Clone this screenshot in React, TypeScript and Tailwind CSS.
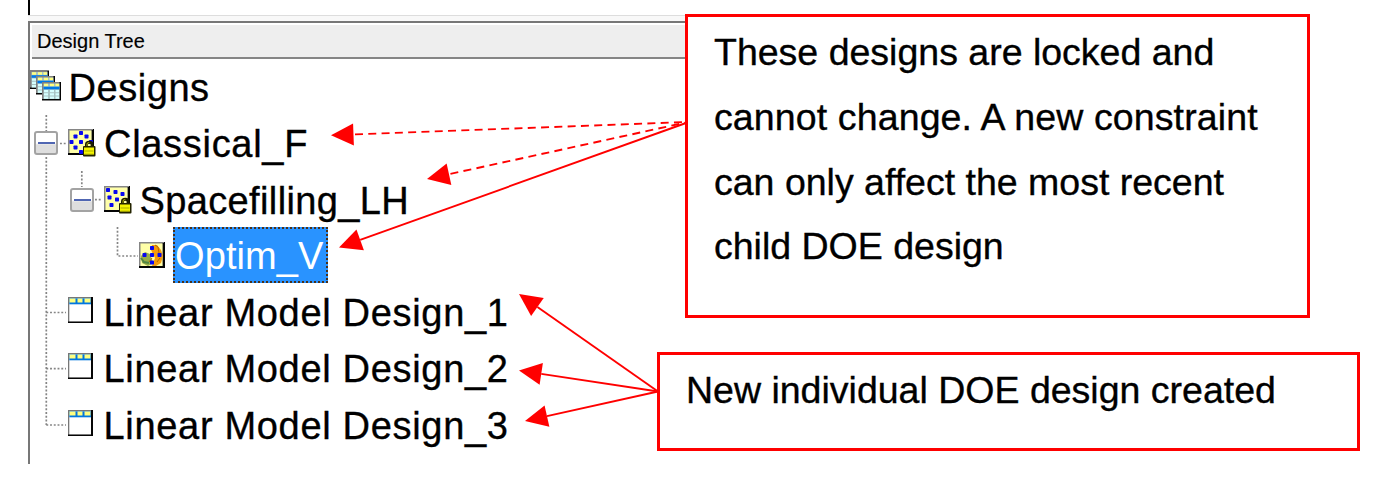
import type { ReactNode } from "react";

type Point = [number, number];

function Arrow({ from, to, dashed = false }: { from: Point; to: Point; dashed?: boolean }) {
  const dx = from[0] - to[0];
  const dy = from[1] - to[1];
  const length = Math.hypot(dx, dy);
  const ux = dx / length;
  const uy = dy / length;
  const bx = to[0] + ux * 22.5;
  const by = to[1] + uy * 22.5;
  return (
    <g>
      <line
        x1={bx}
        y1={by}
        x2={from[0]}
        y2={from[1]}
        stroke="#ff0000"
        strokeWidth="1.9"
        strokeDasharray={dashed ? "8 5.3" : undefined}
        strokeDashoffset={dashed ? -1.5 : undefined}
      />
      <polygon
        points={`${to[0]},${to[1]} ${bx - uy * 11},${by + ux * 11} ${bx + uy * 11},${by - ux * 11}`}
        fill="#ff0000"
      />
    </g>
  );
}

function TableSheet({ x, y }: { x: number; y: number }) {
  return (
    <g transform={`translate(${x} ${y})`}>
      <rect width="19" height="18.5" fill="#050505" />
      <rect width="17.5" height="17" fill="#808080" />
      <rect x="1.5" y="1.5" width="16" height="15.5" fill="#a8c4c4" />
      <path d="M2 3h4M8 3h4M13.5 3h3.5" stroke="#ffff80" strokeWidth="2.6" />
      <path d="M1.5 6h16" stroke="#0078e8" strokeWidth="2.6" />
      <path d="M2 9.2h4M8 9.2h4M13.5 9.2h3.5M2 12.4h4M8 12.4h4M13.5 12.4h3.5M2 15.6h4M8 15.6h4M13.5 15.6h3.5" stroke="#d5ffff" strokeWidth="2.2" />
    </g>
  );
}

function DesignsIcon() {
  return (
    <svg className="mb-[3px] h-[31px] w-[31px] shrink-0" viewBox="0 0 31 31">
      <TableSheet x={0} y={0.5} />
      <TableSheet x={6} y={6} />
      <TableSheet x={12} y={12} />
    </svg>
  );
}

function Sheet({ children }: { children: ReactNode }) {
  return (
    <svg className="h-7 w-7 shrink-0" viewBox="0 0 28 28">
      <rect width="26" height="26" fill="#050505" />
      <rect width="25" height="25" fill="#858585" />
      <path d="M24.5 1v24M0 25h26" stroke="#050505" strokeWidth="2" />
      <rect x="1.5" y="1.5" width="22" height="22.5" fill="#ffffa8" />
      {children}
    </svg>
  );
}

function Dots({ points }: { points: Point[] }) {
  return (
    <>
      {points.map(([x, y]) => (
        <rect key={`${x}-${y}`} x={x - 2} y={y - 2} width="4" height="4" rx="0.7" fill="#0808f0" />
      ))}
    </>
  );
}

function Lock() {
  return (
    <g>
      <path d="M18.5 18v-2.5q0-2.2 2.8-2.2t2.8 2.2V18" fill="none" stroke="#1b1b00" strokeWidth="3" />
      <path d="M19 18v-2.5q0-2 2.3-2" fill="none" stroke="#a8a800" strokeWidth="1.1" />
      <rect x="15" y="17" width="12.5" height="10.5" rx="1" fill="#242400" />
      <rect x="16" y="18.5" width="10" height="7" fill="#f5f500" />
      <path d="M16.5 22h9M16.5 25.2h9" stroke="#a3a300" strokeWidth="0.9" />
    </g>
  );
}

function ClassicalIcon() {
  return (
    <Sheet>
      <Dots points={[[13, 4], [7.5, 7.5], [18.5, 7.5], [3.5, 13], [13, 13], [23, 13], [7.5, 18.5], [13, 23]]} />
      <Lock />
    </Sheet>
  );
}

function SpacefillingIcon() {
  return (
    <Sheet>
      <Dots points={[[4, 4], [11.5, 6], [18.5, 8], [5.5, 11.5], [13, 13.5], [7.5, 19]]} />
      <Lock />
    </Sheet>
  );
}

function OptimIcon() {
  return (
    <Sheet>
      <path d="M2 14l4-4 5 2 3 9-5 3-6-3z" fill="#98ad48" />
      <path d="M13 3h5l4 5 2 6-2 7-5 3h-4l3-8-4-8z" fill="#f59b0b" />
      <path d="M16 3l3 2 1 6M18 20l3-4M10 20l3-4" stroke="#b76700" fill="none" strokeWidth="1" />
      <path d="M2 16l3 4 5 1" stroke="#528542" fill="none" strokeWidth="2" />
      <Dots points={[[13, 6], [5.5, 13], [13, 13], [20.5, 13], [13, 20.5]]} />
    </Sheet>
  );
}

function ModelIcon() {
  return (
    <svg className="mb-0.5 h-7 w-7 shrink-0" viewBox="0 0 28 28">
      <rect width="25" height="26" fill="#060606" />
      <rect width="23" height="24.5" fill="#777" />
      <rect x="1.3" y="1.3" width="21.7" height="23" fill="#fff" />
      <rect x="1.3" y="1.3" width="21.7" height="6" fill="#0077df" />
      <path d="M1.5 3.5h6M9.5 3.5h5M16.5 3.5h6" stroke="#ffff80" strokeWidth="4.2" />
    </svg>
  );
}

function Expander() {
  return (
    <span className="flex h-6 w-6 shrink-0 items-center justify-center rounded-[3px] border-2 border-[#a3a3a3] bg-linear-to-b from-white from-50% to-[#dedede] to-60%">
      <span className="h-0.5 w-[17px] bg-[#5066b2]" />
    </span>
  );
}

const models = ["Linear Model Design_1", "Linear Model Design_2", "Linear Model Design_3"];

export default function App() {
  return (
    <main className="relative h-[500px] w-[1398px] overflow-hidden bg-white font-['Liberation_Sans',Arial,sans-serif] text-black [-webkit-text-stroke:0.35px_currentColor]">
      <div className="flex h-[464px] w-[690px] flex-col pl-7">
        <div className="h-[15px] shrink-0 border-l-2 border-black" />
        <div className="h-[6px] shrink-0 border-t border-[#ddd] bg-[#f8f8f8]" />
        <section className="flex min-h-0 flex-1 flex-col border-l-2 border-t-2 border-[#777]">
          <header className="mt-[2px] ml-[2px] flex h-[34px] shrink-0 items-center border-b-2 border-[#858585] bg-[#eeeeee] pl-[5px] text-[20px] leading-none [-webkit-text-stroke:0.15px_currentColor]">
            <span className="whitespace-nowrap">Design Tree</span>
          </header>
          <div className="flex flex-col text-[38px] leading-none whitespace-nowrap">
            <div className="flex h-[56.25px] items-center">
              <DesignsIcon />
              <span className="pt-0.5 pl-[7.5px] tracking-[0.55px]">Designs</span>
            </div>
            <div className="flex h-[56.25px] items-center pl-1">
              <Expander />
              <span className="flex items-center gap-2 pl-[10px]">
                <ClassicalIcon />
                <span className="pt-0.5 tracking-[0.7px]">Classical_F</span>
              </span>
            </div>
            <div className="flex h-[56.25px] items-center pl-10">
              <Expander />
              <span className="flex items-center gap-2 pl-[9.5px]">
                <SpacefillingIcon />
                <span className="pt-0.5 tracking-[0.37px]">Spacefilling_LH</span>
              </span>
            </div>
            <div className="flex h-[56.25px] items-center gap-[6px] pl-[109px]">
              <OptimIcon />
              <span className="mb-0.5 flex h-14 w-[155px] items-center border-2 border-dotted border-[#49301a] bg-[#2993ff] pt-[3px] tracking-[0.1px] text-white [-webkit-text-stroke:0px]">
                Optim_V
              </span>
            </div>
            {models.map((name) => (
              <div key={name} className="flex h-[56.25px] items-center gap-2 pl-[37.5px]">
                <ModelIcon />
                <span className="pt-0.5 tracking-[0.68px]">{name}</span>
              </div>
            ))}
          </div>
        </section>
      </div>

      <svg className="pointer-events-none absolute inset-0 h-[500px] w-[1398px]" viewBox="0 0 1398 500">
        <path
          d="M46.3 115V131M46.3 157V425M46.3 312.5H66M46.3 368.7H66M46.3 425H66M81.8 171V187M60 143.5H67M95 199.7H102M117.5 227V256H138"
          fill="none"
          stroke="#858585"
          strokeWidth="1.7"
          strokeDasharray="1.9 1.85"
        />
        <Arrow from={[686, 122]} to={[331, 135.3]} dashed />
        <Arrow from={[686, 122.5]} to={[427, 179]} dashed />
        <Arrow from={[686, 123]} to={[339, 247.5]} />
        <Arrow from={[658, 391.5]} to={[519, 294]} />
        <Arrow from={[658, 391.5]} to={[519, 370.5]} />
        <Arrow from={[658, 391.5]} to={[525, 421]} />
      </svg>

      <aside className="absolute top-[14px] left-[685px] h-[304px] w-[625px] border-3 border-[#ff0000] bg-white pt-[3px] pl-[26px] text-[37.5px] leading-[64.8px] whitespace-nowrap">
        <p>These designs are locked and</p>
        <p className="tracking-[0.12px]">cannot change. A new constraint</p>
        <p>can only affect the most recent</p>
        <p>child DOE design</p>
      </aside>
      <aside className="absolute top-[352px] left-[657px] h-[99px] w-[703px] border-3 border-[#ff0000] bg-white pt-[3px] pl-[26px] text-[37.5px] leading-[65px] whitespace-nowrap">
        <p>New individual DOE design created</p>
      </aside>
    </main>
  );
}
